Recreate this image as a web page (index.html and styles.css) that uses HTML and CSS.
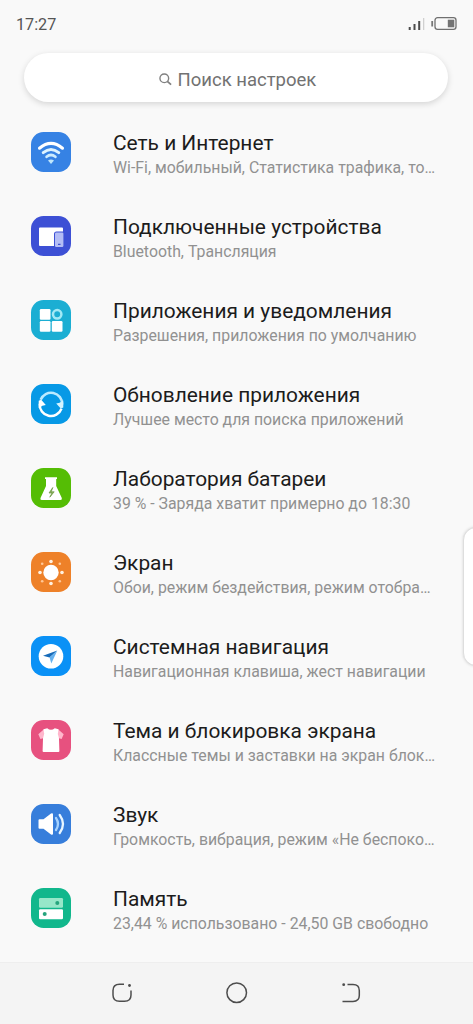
FILE: index.html
```
<!DOCTYPE html>
<html lang="ru">
<head>
<meta charset="utf-8">
<title>Настройки</title>
<link rel="stylesheet" href="styles.css">
</head>
<body>
<div class="screen">
  <header class="status">
    <span class="clock">17:27</span>
    <svg class="status-icons" width="50" height="16" viewBox="0 0 50 16">
      <g fill="#4c4c4c"><rect x=".7" y="11" width="2" height="3"/><rect x="5.5" y="8" width="2" height="6"/><rect x="10.2" y="5" width="2" height="9"/></g>
      <rect x="15" y="2" width="1.3" height="12" fill="#d0d0d0"/>
      <rect x="23.3" y="5" width="1.8" height="5.5" fill="#777"/>
      <rect x="27" y="1.7" width="21" height="11.6" rx="2.6" fill="none" stroke="#707070" stroke-width="1.3"/>
      <rect x="39.8" y="3.7" width="6.5" height="7.6" fill="#737373"/>
    </svg>
  </header>
  <div class="search">
    <svg width="13" height="13" viewBox="0 0 14 14" fill="none" stroke="#808080" stroke-width="1.5"><circle cx="5.7" cy="5.7" r="4.7"/><path d="M9 9l4 3.6" stroke-width="1.9"/></svg>
    <span class="search-text">Поиск настроек</span>
  </div>
  <main class="list">
    <div class="row">
      <svg class="icon wifi" viewBox="0 0 40 40"><g fill="none" stroke="#fff" stroke-width="3"><path d="M8.5 16.2Q20 6.6 31.5 16.2" stroke-linecap="round" stroke-width="3.1"/><path d="M12.2 20.6Q20 14.2 27.8 20.6" stroke="#ddf3ff" stroke-linecap="round" stroke-width="2.9"/><path d="M15.6 24.8Q20 21.2 24.4 24.8" stroke="#ccecff" stroke-linecap="round" stroke-width="2.7"/></g><path d="M17 28.5Q20 26.5 23 28.5L20 32z" fill="#bfe6fb"/></svg>
      <div class="text"><div class="title">Сеть и Интернет</div><div class="sub">Wi-Fi, мобильный, Статистика трафика, то…</div></div>
    </div>
    <div class="row">
      <svg class="icon devices" viewBox="0 0 40 40"><path d="M9 11.5H31Q32 11.5 32 12.5V15.5H25.5Q23 15.5 23 18V30H9Q8 30 8 29V12.5Q8 11.5 9 11.5z" fill="#fff"/><rect x="24" y="16.5" width="8.4" height="14.5" rx="1.2" fill="#b4bdf5"/><path d="M27 28.3h2.5" stroke="#4051cf" stroke-width="1.3"/></svg>
      <div class="text"><div class="title">Подключенные устройства</div><div class="sub">Bluetooth, Трансляция</div></div>
    </div>
    <div class="row">
      <svg class="icon apps" viewBox="0 0 40 40"><g fill="#fff"><rect x="8.8" y="9" width="10.7" height="10.7" rx="1.2"/><rect x="8.8" y="21" width="10.7" height="10.7" rx="1.2"/><rect x="20.8" y="21" width="10.7" height="10.7" rx="1.2"/></g><circle cx="26.2" cy="14.3" r="4.2" fill="none" stroke="#a2e9f5" stroke-width="2.5"/></svg>
      <div class="text"><div class="title">Приложения и уведомления</div><div class="sub">Разрешения, приложения по умолчанию</div></div>
    </div>
    <div class="row">
      <svg class="icon update" viewBox="0 0 40 40"><g fill="none" stroke-width="2.5"><path d="M9.6 15.8A11.2 11.2 0 0 1 31.2 20.5" stroke="#bceaff"/><path d="M30.5 24.6A11.2 11.2 0 0 1 8.8 19.8" stroke="#fff"/></g><path d="M25.2 19.6L28.6 18.7 32.3 16.4V23.6L29.8 24.6z" fill="#d5f3ff"/><path d="M14.8 21L11.4 21.7 7.7 24V16.8L10.2 15.8z" fill="#fff"/></svg>
      <div class="text"><div class="title">Обновление приложения</div><div class="sub">Лучшее место для поиска приложений</div></div>
    </div>
    <div class="row">
      <svg class="icon battery" viewBox="0 0 40 40"><path d="M14 9.3H26V11H25.2V18L30.8 30Q31.4 32 29.5 32H10.7Q8.8 32 9.5 30L15 18V11H14z" fill="#fff"/><path d="M21.8 19.5L18 25h3l-2.2 4.2 4.4-5.4h-3z" fill="#8eae64" stroke="#67963a" stroke-width=".7"/></svg>
      <div class="text"><div class="title">Лаборатория батареи</div><div class="sub">39 % - Заряда хватит примерно до 18:30</div></div>
    </div>
    <div class="row">
      <svg class="icon display" viewBox="0 0 40 40"><circle cx="20" cy="20.5" r="7.7" fill="#fff"/><g fill="#fff0df"><circle cx="20" cy="9.5" r="1.8"/><circle cx="20" cy="31.5" r="1.8"/><circle cx="9" cy="20.5" r="1.8"/><circle cx="31" cy="20.5" r="1.8"/></g><g fill="#ffc898"><circle cx="11.2" cy="11.7" r="1.3"/><circle cx="28.8" cy="11.7" r="1.3"/><circle cx="11.2" cy="29.3" r="1.3"/><circle cx="28.8" cy="29.3" r="1.3"/></g></svg>
      <div class="text"><div class="title">Экран</div><div class="sub">Обои, режим бездействия, режим отобра…</div></div>
    </div>
    <div class="row">
      <svg class="icon navigation" viewBox="0 0 40 40"><circle cx="20" cy="20.2" r="12.3" fill="#fff"/><path d="M12 19.8L26.3 14.5 18.6 21.5z" fill="#176bb9"/><path d="M26.3 14.5L18.6 21.5 20.3 27.5z" fill="#64b1ef"/></svg>
      <div class="text"><div class="title">Системная навигация</div><div class="sub">Навигационная клавиша, жест навигации</div></div>
    </div>
    <div class="row">
      <svg class="icon theme" viewBox="0 0 40 40"><path d="M13.2 9L7.3 14.2 9.4 18.9 13 18zM26.8 9L32.7 14.2 30.6 18.9 27 18z" fill="#ffb6cc"/><path d="M12.5 9.2L16.2 8.2Q20 11.5 23.8 8.2L27.5 9.2Q26 14 28 18.5L28.4 31Q28.4 32 27.4 32H12.6Q11.6 32 11.6 31L12 18.5Q14 14 12.5 9.2z" fill="#fff"/></svg>
      <div class="text"><div class="title">Тема и блокировка экрана</div><div class="sub">Классные темы и заставки на экран блок…</div></div>
    </div>
    <div class="row">
      <svg class="icon sound" viewBox="0 0 40 40"><path d="M8.5 15.2H12.5L20 9.5Q22 8.7 22 10.5V29.5Q22 31.3 20 30.5L12.5 24.8H8.5Q7.5 24.8 7.5 23.8V16.2Q7.5 15.2 8.5 15.2z" fill="#fff"/><g fill="none" stroke-linecap="round"><path d="M25 14Q29 20 25 26" stroke="#a5d2ff" stroke-width="2.3"/><path d="M28.7 11Q35.3 20 28.7 29" stroke="#e8f6ff" stroke-width="2.3"/></g></svg>
      <div class="text"><div class="title">Звук</div><div class="sub">Громкость, вибрация, режим «Не беспоко…</div></div>
    </div>
    <div class="row">
      <svg class="icon storage" viewBox="0 0 40 40"><rect x="8" y="10" width="24" height="9.7" rx="1.2" fill="#96e7c9"/><rect x="8" y="21.2" width="24" height="10" rx="1.2" fill="#fff"/><g fill="#26a47d"><circle cx="26.3" cy="15" r="2"/><circle cx="13.7" cy="26" r="2"/></g></svg>
      <div class="text"><div class="title">Память</div><div class="sub">23,44 % использовано - 24,50 GB свободно</div></div>
    </div>
  </main>
  <nav class="navbar">
    <svg viewBox="0 0 24 24"><path d="M14 3.2H9.5Q3 3.2 3 9.5V14Q3 20.3 9.5 20.3H14.5Q21 20.3 21 14V9.5"/><circle class="dot" cx="19.5" cy="4.5" r="1.4"/></svg>
    <svg viewBox="0 0 24 24"><circle cx="11.7" cy="11.7" r="9.8"/></svg>
    <svg viewBox="0 0 24 24"><path d="M8.5 3.6H14Q20.3 3.6 20.3 9.5V14.5Q20.3 20.4 14 20.4H3.5"/><circle class="dot" cx="4.7" cy="3.7" r="1.4"/></svg>
  </nav>
  <div class="edge-panel"></div>
</div>
</body>
</html>
```

FILE: styles.css
```
body { margin: 0; font-family: Roboto, "Noto Sans", sans-serif; }
.screen {
  position: relative;
  display: flex;
  flex-direction: column;
  box-sizing: border-box;
  width: 473px;
  height: 1024px;
  overflow: hidden;
  background: #f9f9f9;
}
.status {
  display: flex;
  justify-content: space-between;
  align-items: center;
  box-sizing: border-box;
  height: 53px;
  padding: 0 15px 5px 16px;
}
.clock { padding-top: 1px; font-size: 16.2px; line-height: 20px; color: #555; }
.status-icons { display: block; }
.search {
  display: flex;
  justify-content: center;
  align-items: center;
  gap: 6px;
  box-sizing: border-box;
  height: 49px;
  margin: 0 25px 8px 24px;
  padding: 4px 0 0 3px;
  border-radius: 25px;
  background: #fff;
  box-shadow: 0 2px 6px rgba(0, 0, 0, 0.15);
}
.search-text { font-size: 18.5px; line-height: 24px; color: #727272; }
.list { flex: 1; }
.row { display: flex; height: 84px; }
.icon { flex: none; width: 40px; height: 40px; margin: 22px 42px 0 31px; border-radius: 12.5px; }
.wifi { background: #3682e4; }
.devices { background: #3d50d5; }
.apps { background: #1baed3; }
.update { background: #0799e6; }
.battery { background: #55bd05; }
.display { background: #ee8129; }
.navigation { background: #0a91f6; }
.theme { background: #e7517f; }
.sound { background: #377edb; }
.storage { background: #11b78c; }
.text { padding-top: 20px; white-space: nowrap; }
.title { font-size: 20.9px; line-height: 26px; color: #1c1c1c; }
.sub { padding-top: 1px; font-size: 15.85px; line-height: 22px; color: #919191; }
.navbar {
  display: flex;
  justify-content: space-between;
  box-sizing: border-box;
  height: 62px;
  padding: 18px 111px 0 110px;
  background: #f4f4f4;
  border-top: 1px solid #eee;
}
.navbar svg { width: 24px; height: 24px; fill: none; stroke: #4d4d4d; stroke-width: 1.5; }
.navbar svg:last-child { margin-right: -1px; }
.navbar .dot { fill: #4d4d4d; stroke: none; }
.edge-panel {
  position: absolute;
  top: 527px;
  right: -20px;
  width: 28px;
  height: 137px;
  border: 1px solid #dedede;
  border-radius: 13px;
  background: #fff;
  box-shadow: 0 0 3px rgba(0, 0, 0, 0.15);
}
```
